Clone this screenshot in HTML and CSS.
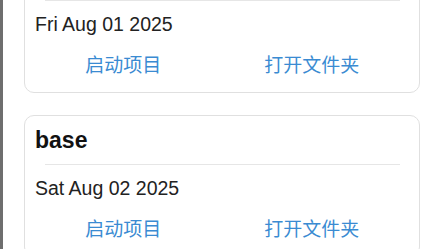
FILE: index.html
```html
<!DOCTYPE html>
<html lang="zh-CN">
<head>
    <meta charset="UTF-8">
    <link rel="stylesheet" href="styles.css">
</head>
<body>
<main class="list">
    <!-- 项目卡片 -->
    <div class="card">
        <h3 class="card-title">demo</h3>
        <div class="card-line"></div>
        <p class="card-date">Fri Aug 01 2025</p>
        <div class="card-actions">
            <button class="btn">启动项目</button>
            <button class="btn">打开文件夹</button>
        </div>
    </div>
    <div class="card">
        <h3 class="card-title">base</h3>
        <div class="card-line"></div>
        <p class="card-date">Sat Aug 02 2025</p>
        <div class="card-actions">
            <button class="btn">启动项目</button>
            <button class="btn">打开文件夹</button>
        </div>
    </div>
</main>
</body>
</html>
```

FILE: styles.css
```css
* {
    margin: 0;
    padding: 0;
    box-sizing: border-box;
}

body {
    background: #fff;
    border-left: 3px solid #6e6e6e;
    min-height: 100vh;
    font-family: "Liberation Sans", "Noto Sans CJK SC", sans-serif;
    overflow: hidden;
}

.list {
    display: flex;
    flex-direction: column;
    gap: 22px;
    margin: -49px 23px 0 21px;
}

.card {
    height: 142px;
    border: 1px solid #e0e0e0;
    border-radius: 10px;
    padding: 11px 10px 0 10px;
    background: #fff;
}

.card-title {
    font-size: 23px;
    line-height: 26px;
    font-weight: bold;
    color: #111;
}

.card-line {
    height: 1px;
    background: #e6e6e6;
    margin: 11px 9px 11px 10px;
}

.card-date {
    font-size: 19.5px;
    line-height: 24px;
    color: #222;
}

.card-actions {
    display: flex;
    height: 56px;
    padding-top: 3px;
    margin: 0 3px 0 -6px;
}

.btn {
    flex: 1;
    border: none;
    background: none;
    font-family: inherit;
    font-size: 19px;
    line-height: 24px;
    color: #3a8bd2;
    cursor: pointer;
}
```
